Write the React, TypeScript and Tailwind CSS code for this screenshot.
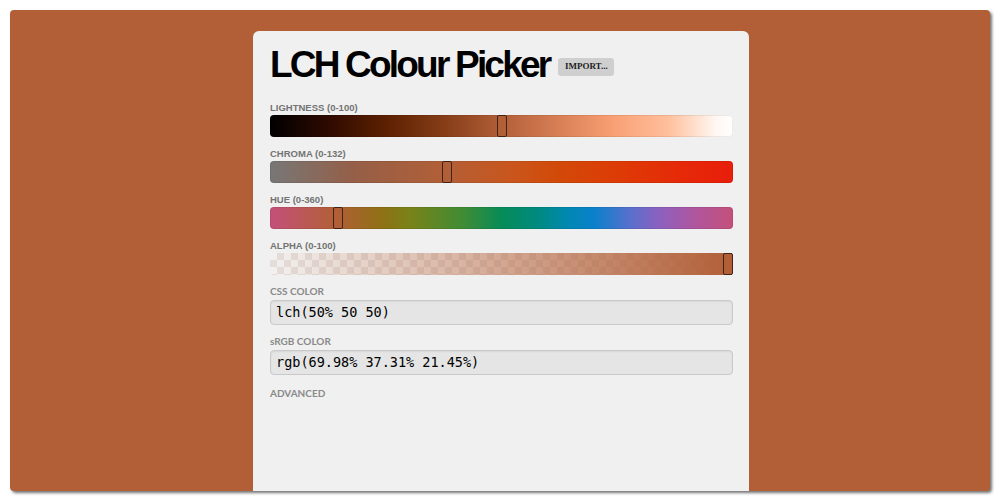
import React from 'react';

interface SliderProps {
  label: string;
  value: number;
  max: number;
  track: string;
  checker?: boolean;
}

function Slider({ label, value, max, track, checker }: SliderProps) {
  const pct = (value / max) * 100;

  return (
    <div className="mb-[10px]">
      <div className="font-['Liberation_Sans',Arial,sans-serif] text-[9.5px] font-bold leading-[13px] text-[#737373]">
        {label}
      </div>
      <div className="relative mt-[1px] h-[22px] w-full">
        {checker ? (
          <div className="h-full w-full overflow-hidden rounded-[4px] bg-[#f3f1f0] bg-[conic-gradient(#e4dedb_25%,transparent_0_50%,#e4dedb_0_75%,transparent_0)] bg-size-[14px_14px]">
            <div className={`h-full w-full ${track}`} />
          </div>
        ) : (
          <div className={`h-full w-full rounded-[4px] shadow-[inset_0_0_0_1px_rgba(0,0,0,0.07)] ${track}`} />
        )}
        {/* thumb */}
        <div
          className="absolute top-0 h-[22px] w-[10px] rounded-[2px] border border-[#3b2418] bg-[#b25f37]"
          style={{ left: `calc((100% - 10px) * ${pct / 100})` }}
        />
      </div>
    </div>
  );
}

function ColorField({ label, value }: { label: string; value: string }) {
  return (
    <div className="mb-[10px]">
      <div className="font-['Lato',sans-serif] text-[10px] font-bold leading-[13px] text-[#8a8a8a]">
        {label}
      </div>
      <div className="mt-[2px] flex h-[25px] items-center rounded-[4px] border border-[#c9c9c9] bg-[#e5e5e5] pl-[5px] font-['DejaVu_Sans_Mono',monospace] text-[13.5px] text-black shadow-[inset_0_1px_2px_rgba(0,0,0,0.06)]">
        {value}
      </div>
    </div>
  );
}

export default function App() {
  return (
    <div className="h-[500px] w-[1000px] bg-white px-[10px] pt-[10px] pb-[9px]">
      <div className="flex h-full justify-center overflow-hidden rounded-[4px] bg-[#b25f37] pt-[21px] pl-[2px] shadow-[2px_2px_3px_rgba(0,0,0,0.55)]">
        <div className="w-[496px] rounded-t-[6px] bg-[#f0f0f0] px-[16px] pt-[14px] pl-[17px]">
          {/* header */}
          <div className="flex items-center">
            <h1 className="font-['Liberation_Sans',Arial,sans-serif] text-[37px] leading-[40px] font-bold tracking-[-2.8px] text-black">
              LCH Colour Picker
            </h1>
            <button className="mt-[4px] ml-[9px] h-[18px] w-[56px] rounded-[3px] bg-[#cfcfcf] font-['Liberation_Serif',serif] text-[9px] font-bold text-[#222]">
              IMPORT...
            </button>
          </div>

          <div className="mt-[16px]">
            <Slider
              label="LIGHTNESS (0-100)"
              value={50}
              max={100}
              track="bg-[linear-gradient(to_right,#000_0%,#2c0900_12%,#5c2000_25%,#873e18_38%,#b25f37_50%,#d77e55_62%,#f99f74_74%,#ffbf9c_86%,#fff6f0_96%,#fff_100%)]"
            />
            <Slider
              label="CHROMA (0-132)"
              value={50}
              max={132}
              track="bg-[linear-gradient(to_right,#777777_0%,#955f47_18%,#b25f37_38%,#c9561d_52%,#d24a08_62%,#de3a06_76%,#e52a08_88%,#e81e0b_100%)]"
            />
            <Slider
              label="HUE (0-360)"
              value={50}
              max={360}
              track="bg-[linear-gradient(to_right,#c4507a_0%,#b25f37_14%,#8f7015_24%,#7a8218_30%,#3e8c35_42%,#078b58_50%,#008a80_58%,#0088b0_64%,#0a80cc_70%,#5a70cc_78%,#8c60c0_84%,#b0559c_92%,#c4507a_100%)]"
            />
            <Slider
              label="ALPHA (0-100)"
              value={100}
              max={100}
              checker
              track="bg-[linear-gradient(to_right,rgba(178,95,55,0),#b25f37)]"
            />
          </div>

          <ColorField label="CSS COLOR" value="lch(50% 50 50)" />
          <ColorField label="sRGB COLOR" value="rgb(69.98% 37.31% 21.45%)" />

          <div className="mt-[12px] font-['Lato',sans-serif] text-[10px] font-bold leading-[13px] text-[#8a8a8a]">
            ADVANCED
          </div>
        </div>
      </div>
    </div>
  );
}
